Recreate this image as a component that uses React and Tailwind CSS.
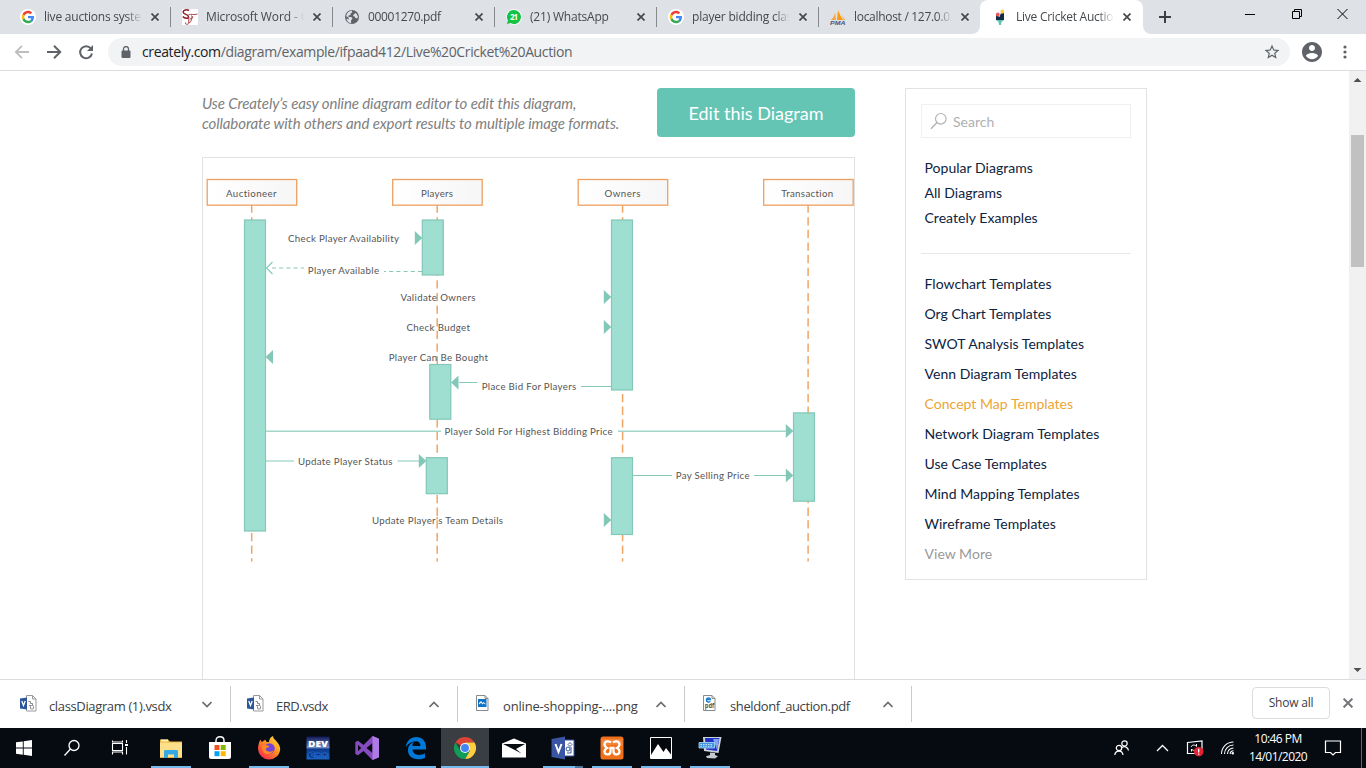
import React from "react";

const GoogleG = () => (
  <svg width="16" height="16" viewBox="0 0 16 16">
    <circle cx="8" cy="8" r="8" fill="#fff" />
    <g transform="translate(1.8 1.8) scale(0.258)">
      <path fill="#EA4335" d="M24 9.5c3.54 0 6.71 1.22 9.21 3.6l6.85-6.85C35.9 2.38 30.47 0 24 0 14.62 0 6.51 5.38 2.56 13.22l7.98 6.19C12.43 13.72 17.74 9.5 24 9.5z" />
      <path fill="#4285F4" d="M46.98 24.55c0-1.57-.15-3.09-.38-4.55H24v9.02h12.94c-.58 2.96-2.26 5.48-4.78 7.18l7.73 6c4.51-4.18 7.09-10.36 7.09-17.65z" />
      <path fill="#FBBC05" d="M10.53 28.59c-.48-1.45-.76-2.99-.76-4.59s.27-3.14.76-4.59l-7.98-6.19C.92 16.46 0 20.12 0 24c0 3.88.92 7.54 2.56 10.78l7.97-6.19z" />
      <path fill="#34A853" d="M24 48c6.48 0 11.93-2.13 15.89-5.81l-7.73-6c-2.15 1.45-4.92 2.3-8.16 2.3-6.26 0-11.57-4.22-13.47-9.91l-7.98 6.19C6.51 42.62 14.62 48 24 48z" />
    </g>
  </svg>
);

const ScriptIcon = () => (
  <svg width="16" height="16" viewBox="0 0 16 16" fill="none">
    <rect width="16" height="16" fill="#fff" />
    <path d="M7 1.500C5 .200 1 .800 1.200 3.200S6.500 5.200 6.500 7.700 2.500 9.500.8 7.500" stroke="#8c1d24" strokeWidth="1.500" />
    <path d="M6.500 5.800c3-1.300 5.500.7 9-.8" stroke="#a5383e" strokeWidth=".9" />
    <path d="M9.500 6.500c1.500 3-1 7.500-4 8.700-1.500.5-2.700-.5-1.700-1.700M6.800 8v6M8 10c2 0 2.800-1.500 2.700-2.700" stroke="#a5383e" strokeWidth="1" />
  </svg>
);

const GlobeIcon = () => (
  <svg width="16" height="16" viewBox="0 0 16 16">
    <circle cx="8" cy="8" r="7" fill="#5f6368" />
    <path d="M7.700 1.500 8.200 3.500 6.400 4.500 6.600 6 4.500 6.500 4.300 8h3l1.200 1.500-1.500 2 .2 2.700C4.500 14 2.800 12 2.400 9.500l2.300 1V8.700L2.200 7.200c.5-3 2.700-5.300 5.500-5.700z" fill="#dee1e6" />
    <path d="m10 5 2-1 2 3.500-.8 2-1.700-.5-1-1.500-1.500-.5z" fill="#dee1e6" />
  </svg>
);

const WhatsIcon = () => (
  <svg width="16" height="16" viewBox="0 0 16 16">
    <circle cx="8" cy="8" r="8" fill="#fff" opacity=".7" />
    <path d="M8 1a7 7 0 1 1-3.500 13.100L.9 15l1-3.500A7 7 0 0 1 8 1z" fill="#12c344" />
    <text x="8" y="11" textAnchor="middle" fontSize="8" fontWeight="700" fill="#fff" fontFamily="Open Sans, sans-serif" textLength="8">21</text>
  </svg>
);

const PmaIcon = () => (
  <svg width="16" height="16" viewBox="0 0 16 16">
    <path d="M1 11C3.500 9 4.500 6 5 3.500L6 11z" fill="#f6a343" />
    <path d="M7 11 8 1c1 3.500 3.500 7 5 10z" fill="#f89c0e" />
    <path d="M12 4c0 3 2 5 3.500 7H13z" fill="#f6b45c" />
    <text x="0" y="15.800" fontSize="6" fontWeight="800" fontStyle="italic" fill="#4f5178" fontFamily="Liberation Sans, sans-serif" textLength="15.500" lengthAdjust="spacingAndGlyphs">PMA</text>
  </svg>
);

const CreatelyIcon = () => (
  <svg width="16" height="16" viewBox="0 0 16 16">
    <path d="M4 5.500 7.500 8l1.200-3.500L12 4v7H4z" fill="#122b46" />
    <path d="M4 11h8l-2.500 2-.5 3H7.200L6.500 13z" fill="#5cc5b2" />
    <circle cx="5.800" cy="5.500" r="1.900" fill="#f1565c" />
    <circle cx="10.300" cy="2.500" r="1.900" fill="#fccb4b" />
  </svg>
);

const CloseX = ({ size = 8, color = "#45494d", w = 1.7 }) => (
  <svg width={size} height={size} viewBox="0 0 8 8" className="shrink-0">
    <path d="M.5.500l7 7M7.500.500l-7 7" stroke={color} strokeWidth={w} />
  </svg>
);

const tabs = [
  { icon: <GoogleG />, title: "live auctions system", fit: "tracking-[-0.22px]" },
  { icon: <ScriptIcon />, title: "Microsoft Word - Co", fit: "tracking-[-0.12px]" },
  { icon: <GlobeIcon />, title: "00001270.pdf", fit: "tracking-[-0.33px]" },
  { icon: <WhatsIcon />, title: "(21) WhatsApp", fit: "tracking-[-0.2px]" },
  { icon: <GoogleG />, title: "player bidding class", fit: "tracking-[-0.2px]" },
  { icon: <PmaIcon />, title: "localhost / 127.0.0.1", fit: "tracking-[-0.3px]" },
];

function TabBody({ icon, title, fit }) {
  return (
    <>
      <div className="w-4 h-4 shrink-0">{icon}</div>
      <div className={"ml-2 w-[98px] overflow-hidden whitespace-nowrap text-[12px] leading-4 text-[#45494d] [mask-image:linear-gradient(to_right,#000_84%,transparent)] " + fit}>{title}</div>
      <div className="ml-[9px] flex"><CloseX /></div>
    </>
  );
}

function TabStrip() {
  return (
    <div className="h-[34px] bg-[#dee1e6] flex shrink-0">
      <div className="w-[9px]" />
      {tabs.map((t, i) => (
        <div key={i} className="w-[162px] h-[34px] flex items-center pl-[11px]">
          <TabBody {...t} />
          <div className={"ml-auto w-px h-5 " + (i < 5 ? "bg-[#85888c]" : "")} />
        </div>
      ))}
      <div className="relative w-[163px] h-[34px] bg-white rounded-t-lg flex items-center pl-[12px] -ml-px">
        <svg className="absolute -left-2 bottom-0" width="8" height="8"><path d="M8 0v8H0a8 8 0 0 0 8-8z" fill="#fff" /></svg>
        <svg className="absolute -right-2 bottom-0" width="8" height="8"><path d="M0 0v8h8a8 8 0 0 1-8-8z" fill="#fff" /></svg>
        <TabBody icon={<CreatelyIcon />} title="Live Cricket Auction" fit="tracking-[-0.25px]" />
      </div>
      <svg className="ml-4 mt-[11px]" width="12" height="12"><path d="M6 0v12M0 6h12" stroke="#3c4043" strokeWidth="2" /></svg>
      <div className="ml-auto flex pt-2 pr-[18px] text-black">
        <svg width="12" height="12" className="mr-[35px]"><path d="M1 6.500h10" stroke="currentColor" /></svg>
        <svg width="12" height="12" className="mr-[34px]" fill="none" stroke="currentColor"><path d="M1.500 3.500h7v7h-7zM3.500 3.500v-2h7v7h-2" /></svg>
        <svg width="11" height="12" fill="none" stroke="currentColor"><path d="M.5 1l10 10M10.500 1l-10 10" /></svg>
      </div>
    </div>
  );
}

function Toolbar() {
  return (
    <div className="h-[37px] bg-white border-b border-[#dadce0] flex items-center shrink-0 pl-[14px]">
      <svg width="16" height="16" viewBox="0 0 16 16" fill="none" stroke="#bcbec0" strokeWidth="1.8"><path d="M15 8H2.500M8 1.800 1.800 8 8 14.200" /></svg>
      <svg className="ml-[16px]" width="16" height="16" viewBox="0 0 16 16" fill="none" stroke="#5f6368" strokeWidth="2"><path d="M1 8h12.500M8 1.800 14.200 8 8 14.200" /></svg>
      <svg className="ml-[16px]" width="16" height="16" viewBox="0 0 16 16"><path d="M12.900 4.500A6 6 0 1 0 14 9.500" fill="none" stroke="#5f6368" strokeWidth="2" /><path d="M15 1v6H9z" fill="#5f6368" /></svg>
      <div className="ml-[14px] w-[1182px] h-7 rounded-full bg-[#f1f3f4] flex items-center pl-[13px] pr-[9px]">
        <svg width="10" height="12" viewBox="0 0 10 12"><path d="M2.500 5V3a2.500 2.500 0 0 1 5 0v2" fill="none" stroke="#5f6368" strokeWidth="1.300" /><rect x=".5" y="4.500" width="9" height="7.500" rx="1" fill="#5f6368" /></svg>
        <div className="ml-[11px] text-[14px] leading-5 whitespace-nowrap tracking-[-0.38px] text-[#5f6368]"><span className="text-[#202124]">creately.com</span>/diagram/example/ifpaad412/Live%20Cricket%20Auction</div>
        <svg className="ml-auto" width="18" height="18" viewBox="0 0 24 24"><path fill="#5f6368" d="M22 9.240l-7.190-.62L12 2 9.190 8.630 2 9.240l5.460 4.730L5.820 21 12 17.270 18.180 21l-1.630-7.030L22 9.240zM12 15.400l-3.760 2.270 1-4.280-3.320-2.880 4.380-.38L12 6.100l1.710 4.040 4.380.38-3.320 2.880 1 4.280L12 15.400z" /></svg>
      </div>
      <svg className="ml-[11px]" width="22" height="22" viewBox="1 1 22 22"><path fill="#5f6368" d="M12 2C6.480 2 2 6.480 2 12s4.480 10 10 10 10-4.480 10-10S17.520 2 12 2zm0 3c1.660 0 3 1.340 3 3s-1.340 3-3 3-3-1.340-3-3 1.340-3 3-3zm0 14.200c-2.500 0-4.710-1.280-6-3.220.03-1.990 4-3.080 6-3.080 1.990 0 5.970 1.090 6 3.080-1.290 1.940-3.500 3.220-6 3.220z" /></svg>
      <svg className="ml-[19px]" width="6" height="16" fill="#5f6368"><circle cx="3" cy="3" r="1.600" /><circle cx="3" cy="8" r="1.600" /><circle cx="3" cy="13" r="1.600" /></svg>
    </div>
  );
}

const lifelines = [
  { name: "Auctioneer", bx: 207.2, x: 251.700, tx: 226, tw: 50.500 },
  { name: "Players", bx: 392.700, x: 437.200, tx: 421, tw: 32 },
  { name: "Owners", bx: 578.200, x: 622.600, tx: 604.500, tw: 36 },
  { name: "Transaction", bx: 763.700, x: 808.100, tx: 781.200, tw: 52 },
];
const bars = [
  [244.500, 220, 21, 311], [422.300, 220, 21, 55], [611.500, 220, 21, 170],
  [429.800, 364.500, 21, 54.700], [426.300, 457.700, 21, 36], [611.500, 457.700, 21, 76.800], [793.500, 412.900, 21, 88.300],
];
const labels = [
  ["Check Player Availability", 288, 242, 111],
  ["Player Available", 307.800, 274, 71.200],
  ["Validate Owners", 400.500, 301, 75],
  ["Check Budget", 406.500, 331, 63.500],
  ["Player Can Be Bought", 388.700, 361, 99.300],
  ["Place Bid For Players", 481.700, 390, 94.500],
  ["Player Sold For Highest Bidding Price", 444.500, 435, 168],
  ["Update Player Status", 298, 465, 94.500],
  ["Pay Selling Price", 675.700, 479, 73.800],
  ["Update Player's Team Details", 372, 524, 131],
];
const arrowsRight = [[422, 238], [611, 297], [611, 327], [793, 431], [426, 461], [793, 475.500], [611, 520]];
const arrowsLeft = [[265.500, 357], [451, 382.500]];

function Diagram() {
  return (
    <svg className="[font-variant-ligatures:none]" width="651" height="521" viewBox="203 158 651 521" fontFamily="Lato, sans-serif" fontSize="9.700" fill="#555">
      <defs>
        <linearGradient id="head" x1="0" x2="1"><stop offset="0" stopColor="#fff" /><stop offset="1" stopColor="#f6f6f6" /></linearGradient>
      </defs>
      {lifelines.map((l) => (
        <line key={l.name} x1={l.x} x2={l.x} y1="204.500" y2="561.500" stroke="#f0a564" strokeWidth="1.500" strokeDasharray="8.300 4.330" />
      ))}
      {lifelines.map((l) => (
        <g key={l.name}>
          <rect x={l.bx} y="179.500" width="89.500" height="25.700" fill="url(#head)" stroke="#eea062" strokeWidth="1.300" />
          <text x={l.tx} y="197" textLength={l.tw}>{l.name}</text>
        </g>
      ))}
      {bars.map(([x, y, w, h], i) => (
        <rect key={i} x={x} y={y} width={w} height={h} fill="#9fdfd2" stroke="#82c7b7" strokeWidth="1.200" />
      ))}
      <g stroke="#85c9b9" strokeWidth="1.100" fill="none">
        <path d="M272 268h32M422 271.500h-38" strokeDasharray="4 3.200" />
        <path d="M272.500 262l-6 6 6 6" />
        <path d="M611 386.500h-30M459 382.500h18.500M266 461h28M397.500 461H419M633 475.500h39M754 475.500h32" />
        <path d="M266 431.200h175M618 431.200h168" strokeWidth="1.400" stroke="#a3d7ca" />
      </g>
      <g fill="#82c7b7">
        {arrowsRight.map(([x, y], i) => <path key={i} d={`M${x - 7.200} ${y - 7}v14l7.500-7z`} />)}
        {arrowsLeft.map(([x, y], i) => <path key={i} d={`M${x + 7.500} ${y - 7}v14l-7.500-7z`} />)}
      </g>
      {labels.map(([t, x, y, w]) => <text key={t} x={x} y={y} textLength={w}>{t}</text>)}
    </svg>
  );
}

const templates = ["Flowchart Templates", "Org Chart Templates", "SWOT Analysis Templates", "Venn Diagram Templates", "Concept Map Templates", "Network Diagram Templates", "Use Case Templates", "Mind Mapping Templates", "Wireframe Templates", "View More"];

function Sidebar() {
  return (
    <aside className="ml-[50px] mt-[17px] w-[242px] h-[492px] border border-[#e2e2e2] px-[15px] pt-[15px] text-[14px] text-[#0d2340] tracking-[0.03px]">
      <div className="h-[34px] border border-[#f0f0f0] flex items-center pl-2 text-[#b0b0b0]">
        <svg width="18" height="18" fill="none" stroke="#b5b5b5" strokeWidth="1.200"><circle cx="10.800" cy="6.800" r="5.300" /><path d="M7 10.500 1 16.800" strokeWidth="1.500" /></svg>
        <span className="ml-[5px] leading-5 pt-px">Search</span>
      </div>
      <ul className="pt-[17px] pl-[3.500px] leading-[25px] h-[115px]">
        <li>Popular Diagrams</li>
        <li>All Diagrams</li>
        <li>Creately Examples</li>
      </ul>
      <ul className="border-t border-[#e8e8e8] pt-[15px] pl-[3.500px] leading-[30px]">
        {templates.map((t) => (
          <li key={t} className={t === "Concept Map Templates" ? "text-[#eba536]" : t === "View More" ? "text-[#999]" : ""}>{t}</li>
        ))}
      </ul>
    </aside>
  );
}

function Page() {
  return (
    <div className="flex-1 min-h-0 flex bg-white overflow-hidden font-[Lato,sans-serif]">
      <main className="ml-[202px] w-[653px] pt-[17px]">
        <div className="flex justify-between h-[49px]">
          <p className="pt-[5px] text-[15px] leading-5 italic text-[#808080] whitespace-nowrap tracking-[-0.1px]">Use Creately’s easy online diagram editor to edit this diagram,<br />collaborate with others and export results to multiple image formats.</p>
          <button className="w-[198px] h-[49px] rounded bg-[#64c5b4] text-white text-[18px] leading-6">Edit this Diagram</button>
        </div>
        <div className="mt-5 border border-[#e2e2e2] h-[540px]"><Diagram /></div>
      </main>
      <Sidebar />
      <div className="ml-auto w-[17px] bg-[#f1f1f1] flex flex-col items-center">
        <svg width="17" height="17"><path d="M4.500 11h8l-4-4z" fill="#505050" /></svg>
        <div className="mt-[47px] w-[13px] h-[132px] bg-[#c1c1c1]" />
        <svg className="mt-auto" width="17" height="17"><path d="M4.500 6h8l-4 4z" fill="#505050" /></svg>
      </div>
    </div>
  );
}

const VisioFile = () => (
  <svg width="17" height="17" viewBox="0 0 17 17">
    <path d="M6.500.500h6l3.500 3.500v12H6.500z" fill="#fff" stroke="#9a9a9a" /><path d="M12.500.500v3.500h3.500" fill="none" stroke="#9a9a9a" />
    <path d="M8.500 6.500h2v2h2M9 10.500h2M12.500 8.500v2" fill="none" stroke="#888" /><rect x="10.500" y="10.500" width="3" height="3.500" rx="1" fill="none" stroke="#888" />
    <path d="M0 3.500 7 2.500v12l-7-1z" fill="#2b579a" /><path d="M1.800 6 3.500 10.500 5.200 6" fill="none" stroke="#fff" strokeWidth="1.300" />
  </svg>
);
const ImageFile = () => (
  <svg width="17" height="17" viewBox="0 0 17 17">
    <path d="M2.500.500h8.500l3 3v12H2.500z" fill="#fff" stroke="#8a8a8a" /><path d="M11 .5v3h3" fill="none" stroke="#8a8a8a" />
    <rect x="4" y="4" width="8.500" height="8" fill="#0f73c6" /><path d="M5 9.500V8l2-2 1.500 2 1-1 2 1.700v.8L9.500 8.300 8.500 9.500 7 7.800z" fill="#fff" />
  </svg>
);
const PdfFile = () => (
  <svg width="17" height="17" viewBox="0 0 17 17">
    <path d="M2.500.500h8.500l3 3v12H2.500z" fill="#fff" stroke="#8a8a8a" /><path d="M11 .5v3h3" fill="none" stroke="#8a8a8a" />
    <path d="M5.300 4.600h4.200C9.300 2.500 5.800 2.300 5.400 4.800c-.2 2 2.200 2.700 4 1.700" fill="none" stroke="#0f7bd6" strokeWidth="1.300" />
    <text x="3.800" y="13.300" fontSize="6.500" fontWeight="700" fill="#555" fontFamily="Open Sans, sans-serif" textLength="9.500" lengthAdjust="spacingAndGlyphs">pdf</text>
  </svg>
);

const downloads = [
  { name: "classDiagram (1).vsdx", icon: <VisioFile />, open: true, w: "w-[231px]", pad: "pl-5", fit: "tracking-[-0.36px]" },
  { name: "ERD.vsdx", icon: <VisioFile />, w: "w-[227px]", pad: "pl-4", fit: "tracking-[-0.45px]" },
  { name: "online-shopping-....png", icon: <ImageFile />, w: "w-[227px]", pad: "pl-4", fit: "tracking-[-0.18px]" },
  { name: "sheldonf_auction.pdf", icon: <PdfFile />, w: "w-[227px]", pad: "pl-4", fit: "tracking-[-0.38px]" },
];

function DownloadBar() {
  return (
    <div className="h-[49px] shrink-0 bg-white border-t border-[#dadce0] flex pt-[6px]">
      {downloads.map((d) => (
        <div key={d.name} className={`${d.w} ${d.pad} h-9 border-r border-[#c8cacd] flex items-start`}>
          <div className="mt-[9px] w-[17px]">{d.icon}</div>
          <div className={"ml-3 mt-[10px] text-[13px] leading-5 whitespace-nowrap text-[#3c4043] " + d.fit}>{d.name}</div>
          <svg className="ml-auto mt-[15px] mr-[18px]" width="10" height="7" fill="none" stroke="#6b6e71" strokeWidth="1.700"><path d={d.open ? "M.5 1 5 5.500 9.500 1" : "M.5 6 5 1.500 9.500 6"} /></svg>
        </div>
      ))}
      <button className="ml-auto mt-px w-[78px] h-[32px] rounded border border-[#dadce0] text-[12px] leading-4 font-medium text-[#3c4043] tracking-[-0.2px]">Show all</button>
      <div className="mt-3 ml-[13px] mr-[13px]"><CloseX size={10} color="#74777a" w={1.6} /></div>
    </div>
  );
}

const apps = [
  { run: true, icon: <svg width="24" height="24" viewBox="0 0 24 24"><path d="M1 3.500h8l2 2h12V22H1z" fill="#e8b13e" /><path d="M2 3.500h7v2H2z" fill="#fff3bd" /><path d="M1 6.500h22V21H1z" fill="#ffe08a" /><path d="M5 22v-6.500c0-1 .5-1.500 1.500-1.500h11c1 0 1.500.5 1.500 1.500V22h-4v-3.500H9V22z" fill="#35a9e6" /></svg> },
  { icon: <svg width="24" height="24" viewBox="0 0 24 24"><path d="M8 6.500V4.500C8 2 9.500.800 12 .800s4 1.200 4 3.700v2" fill="none" stroke="#fff" strokeWidth="1.400" /><path d="M1 6h22v15c0 1-1 2-2 2H3c-1 0-2-1-2-2z" fill="#fff" /><path d="M6.500 9H11.500v5h-5z" fill="#f25022" /><path d="M12.700 9h5v5h-5z" fill="#7fba00" /><path d="M6.500 15.200h5v5h-5z" fill="#00a4ef" /><path d="M12.700 15.200h5v5h-5z" fill="#ffb900" /></svg> },
  { run: true, icon: <svg width="24" height="24" viewBox="0 0 24 24"><defs><linearGradient id="ff" x1="1" y1="0" x2=".2" y2="1"><stop offset="0" stopColor="#ffe94a" /><stop offset=".45" stopColor="#ff9a1f" /><stop offset="1" stopColor="#f5244f" /></linearGradient></defs><path d="M3.500 3.500c.2 1 .8 2 1.500 2.500L8.500 3.500c0 1.200.7 2 1.500 2.500h2c0-2.500 1.300-5 4-6 0 2.500 2 3.500 4 6s3.200 4.500 3.200 7A11 11 0 0 1 12 23.500 11 11 0 0 1 1 13c0-3.500 1-7 2.500-9.500z" fill="url(#ff)" /><circle cx="12.500" cy="12.500" r="5.200" fill="#7543d8" /><path d="M5 10c3-2 6-1 7.500.5-1 1.500-3.500 1-4 2.500 1 3 5 3.500 8 1.500-1 4-9 5.500-11 0z" fill="#ff8a22" /></svg> },
  { icon: <svg width="24" height="24" viewBox="0 0 24 24"><defs><linearGradient id="dv" x1="0" y1="0" x2="0" y2="1"><stop offset="0" stopColor="#101a55" /><stop offset=".48" stopColor="#6f8ac8" /><stop offset=".55" stopColor="#0d3a8c" /><stop offset="1" stopColor="#1a66c9" /></linearGradient></defs><path d="M.5.500h23v23H.5z" fill="url(#dv)" /><g fontFamily="Open Sans, sans-serif" fontWeight="800" fontSize="9.500"><text x="2" y="11" fill="#fff" textLength="20" lengthAdjust="spacingAndGlyphs">DEV</text><text x="2" y="21.500" fill="#08245e" stroke="#2f86ea" strokeWidth=".4" textLength="20" lengthAdjust="spacingAndGlyphs">C++</text></g></svg> },
  { icon: <svg width="24" height="24" viewBox="0 0 24 24"><path fillRule="evenodd" d="M17.500 0 24 2.700v18.600L17.500 24 8.500 15 3 19.300.300 18V6L3 4.700 8.500 9zM17.500 7l-6 5 6 5zM3 8.700v6.600L6.200 12z" fill="#864cbf" /><path d="M17.500 0 24 2.700v18.600L17.500 24z" fill="#ae7be4" /></svg> },
  { run: true, icon: <svg width="24" height="24" viewBox="0 0 24 24"><path fill="#0078d7" d="M1.800 11C2.500 5 6.700 1 12.200 1 18.500 1 22 5.500 22 11v2.600H8.500c.2 3.600 3 5.400 6.500 5.400 2.300 0 4.300-.6 6-1.700v4.400C19 22.700 16.600 23.300 14 23.300c-6 0-10-3.700-10-9 0-4 2.300-7 6-8.500-1 1-1.500 2.300-1.600 4.200h8c0-3-1.500-4.700-4.500-4.700-4 0-7.500 2.200-10.100 5.700z" /></svg> },
  { run: true, active: true, icon: <svg width="22" height="22" viewBox="0 0 24 24"><path d="M12 12 1.600 6A12 12 0 0 1 22.400 6H12z" fill="#db4437" /><path d="M22.400 6A12 12 0 0 1 12 24l5.200-9L12 6z" fill="#ffcd40" /><path d="M1.600 6A12 12 0 0 0 12 24l5.200-9L6.800 15z" fill="#0f9d58" /><circle cx="12" cy="12" r="5.500" fill="#f4f4f4" /><circle cx="12" cy="12" r="4.300" fill="#4285f4" /></svg> },
  { icon: <svg width="24" height="20" viewBox="0 0 24 20"><path d="M0 5.500 12 .500l12 5V19.500H0z" fill="#fff" /><path d="M1 6h22L14 11l5.500 4.500z" fill="#070b12" /></svg> },
  { run: true, multi: true, icon: <svg width="24" height="24" viewBox="0 0 24 24"><path d="M13 4h10v16H13z" fill="#fff" stroke="#3955a3" /><circle cx="17" cy="13" r="2" fill="none" stroke="#3955a3" /><path d="M19 6.500l2 2-2 2-2-2zM20 11v6h-4" fill="none" stroke="#3955a3" /><path d="M.5 3 14 .500v23L.5 21z" fill="#3955a3" /><path d="M4.500 8 7.500 16 10.500 8" fill="none" stroke="#fff" strokeWidth="2" /></svg> },
  { run: true, icon: <svg width="24" height="24" viewBox="0 0 24 24"><rect x=".5" y=".5" width="23" height="23" rx="2.500" fill="#f0701a" /><path d="M1.500 3h21v7c-7-2-14-2-21 2z" fill="#fff" opacity=".15" /><path d="M9.500 12h5M11 6.500C9 4.500 4.500 5 4.500 8.500c0 1.800 1 2.700 2.500 3.500-1.500.8-2.500 1.700-2.500 3.500 0 3.500 5.500 4 6 .5V12M13 6.500c2-2 6.500-1.500 6.500 2 0 1.800-1 2.700-2.500 3.500 1.500.8 2.500 1.700 2.500 3.500 0 3.500-5.500 4-6 .5V12" fill="none" stroke="#fff" strokeWidth="2.300" /></svg> },
  { run: true, icon: <svg width="22" height="22" viewBox="0 0 22 22"><path d="M.5.500h21v21H.5z" fill="#05080d" stroke="#fff" /><path d="M1 18 8 7l5.500 8 2.500-4L21 17.500V21H1z" fill="#fff" /></svg> },
  { run: true, icon: <svg width="24" height="24" viewBox="0 0 24 24"><path d="M5 1h18.500L20.500 17 6 15z" fill="#cbd3d8" /><path d="M7 2h14.500L19 15 8 13.500z" fill="#2030c4" /><path d="M15 3h6L19 14z" fill="#7fa4ee" /><path d="M1 6.500h15.500v5.500H1z" fill="#3c96e0" stroke="#b9d9f2" strokeWidth=".8" /><path d="M2.500 8.500h12.500M2.500 10.300h12.500" stroke="#e8f4ff" strokeDasharray="1.500 1" strokeWidth=".8" /><path d="M12 16.500l5 .5v2l3 1.200-3 2.300-8-.5-1-1.700 4-1.300z" fill="#c4c9cc" /></svg> },
];

function Taskbar() {
  return (
    <div className="h-10 shrink-0 bg-[#060b12] flex text-white">
      <div className="w-[147px] flex items-center">
        <svg className="ml-4" width="16" height="16" viewBox="0 0 16 16" fill="#fff"><path d="M0 2.300 6.800 1.400v6.200H0zM7.700 1.200 16 0v7.600H7.700zM0 8.500h6.800v6.200L0 13.800zM7.700 8.500H16V16l-8.300-1.200z" /></svg>
        <svg className="ml-[31px]" width="18" height="18" fill="none" stroke="#fff" strokeWidth="1.300"><circle cx="11" cy="6.500" r="5" /><path d="M7.500 10 1.500 16.500" /></svg>
        <svg className="ml-[30px]" width="18" height="18" fill="none" stroke="#fff" strokeWidth="1.100"><path d="M1.500 3V1.500M11.500 3V1.500M1.500 4.500h10v7h-10zM1.500 13v2.500M11.500 13v2.500M1 3h11M1 13h11M15.500 1v3M15.500 8v7.500" /><path d="M14 5h3v2h-3z" fill="#fff" stroke="none" /></svg>
      </div>
      {apps.map((a, i) => (
        <div key={i} className={"w-12 mr-px h-10 flex flex-col items-center " + (a.active ? "bg-[#3a3e43]" : "")}>
          <div className="h-[38px] pt-[2px] flex items-center">{a.icon}</div>
          {a.run && <div className={"h-[2px] bg-[#76b9ed] flex justify-end " + (a.active ? "w-12" : "w-10")}>{a.multi && <div className="w-[8px] h-[2px] bg-[#4c779a]" />}</div>}
        </div>
      ))}
      <div className="ml-auto flex items-center">
        <svg width="16" height="18" fill="none" stroke="#fff" strokeWidth="1.200"><circle cx="10.500" cy="4.500" r="2.700" /><path d="M7.500 9c2-2.500 6.500-1.500 7 2.500" /><circle cx="5" cy="9" r="2.700" /><path d="M.800 16c.5-5 7.500-5.500 8.200 0" /></svg>
        <svg className="ml-[26px]" width="13" height="8" fill="none" stroke="#fff" strokeWidth="1.300"><path d="M1 7 6.500 1.500 12 7" /></svg>
        <svg className="ml-[17px]" width="18" height="18" fill="none"><path d="M1.500 3.500 16 2v12.500H1.500z" stroke="#fff" strokeWidth="1.200" /><path d="M5 8c1-2.500 4-2.500 5.500-.5V5M11 9.500c-1 2.500-4 2.500-5.500.5v2.500" stroke="#fff" /><circle cx="12.700" cy="12.700" r="4.800" fill="#e02433" /><path d="M12.700 9.700v3.800M12.700 14.500v1.300" stroke="#fff" strokeWidth="1.300" /></svg>
        <svg className="ml-[16px]" width="16" height="16" fill="none" stroke="#fff" strokeWidth="1.100"><path d="M1.500 14C1.500 7 7 2 13.500 2M4.500 14c0-5 4-9 9-9M7.500 14c0-3.500 2.700-6 6-6M10.200 14c0-2 1.500-3.200 3.300-3.200" /><circle cx="12.800" cy="13.300" r="1.200" fill="#fff" stroke="none" /></svg>
        <div className="ml-3 w-[60px] text-center text-[12px] leading-[18px] whitespace-nowrap"><div className="tracking-[-0.55px]">10:46 PM</div><div className="tracking-[-0.55px]">14/01/2020</div></div>
        <svg className="ml-[16px]" width="18" height="18" fill="none" stroke="#fff" strokeWidth="1.200"><path d="M1.500 2h15v11.500h-5L9 16l-2.500-2.500h-5z" /></svg>
        <div className="ml-[19px] mr-1 w-px h-10 bg-[#64686c]" />
      </div>
    </div>
  );
}

export default function App() {
  return (
    <div className="w-[1366px] h-[768px] flex flex-col overflow-hidden bg-white font-['Open_Sans',sans-serif]">
      <TabStrip />
      <Toolbar />
      <Page />
      <DownloadBar />
      <Taskbar />
    </div>
  );
}
